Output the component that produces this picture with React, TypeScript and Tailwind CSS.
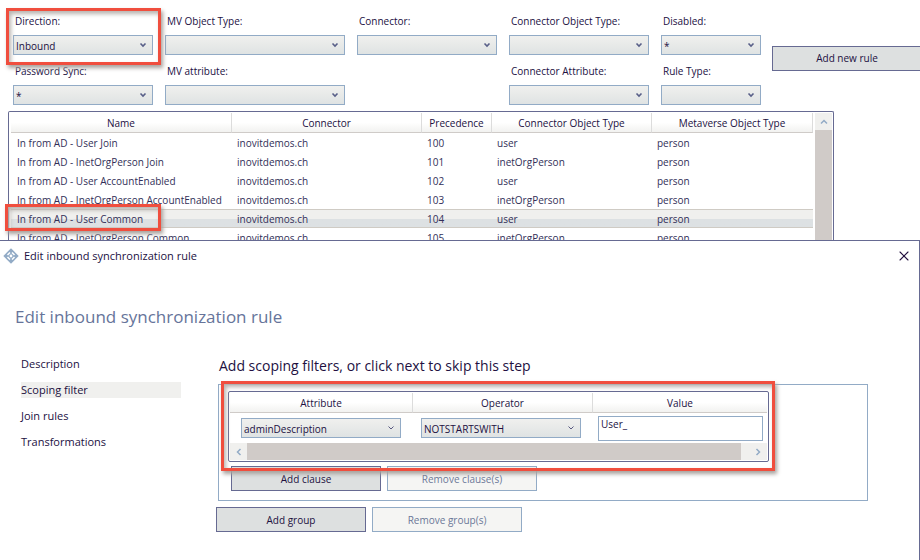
import type { ReactNode } from 'react';
import { X } from 'lucide-react';

type FieldProps = {
  id: string;
  label: string;
  value?: string;
  width: string;
  children?: ReactNode;
};

const rules = [
  ['In from AD - User Join', 'inovitdemos.ch', '100', 'user', 'person'],
  ['In from AD - InetOrgPerson Join', 'inovitdemos.ch', '101', 'inetOrgPerson', 'person'],
  ['In from AD - User AccountEnabled', 'inovitdemos.ch', '102', 'user', 'person'],
  ['In from AD - InetOrgPerson AccountEnabled', 'inovitdemos.ch', '103', 'inetOrgPerson', 'person'],
  ['In from AD - User Common', 'inovitdemos.ch', '104', 'user', 'person'],
  ['In from AD - InetOrgPerson Common', 'inovitdemos.ch', '105', 'inetOrgPerson', 'person'],
];

const headings = ['Name', 'Connector', 'Precedence', 'Connector Object Type', 'Metaverse Object Type'];

const steps = ['Description', 'Scoping filter', 'Join rules', 'Transformations'];

function Highlight({ place }: { place: string }) {
  return (
    <span
      aria-hidden="true"
      className={`pointer-events-none absolute z-10 border-3 border-[#f04e3e] shadow-[2px_3px_4px_#a8a29e,inset_2px_3px_4px_#b8b3af] ${place}`}
    />
  );
}

function Chevron({ className, d }: { className: string; d: string }) {
  return (
    <svg viewBox="0 0 8 8" className={className} fill="none" stroke="currentColor" aria-hidden="true">
      <path d={d} />
    </svg>
  );
}

function Dropdown({ id, value = '', label, thin }: { id: string; value?: string; label?: string; thin?: boolean }) {
  return (
    <div className="relative">
      <select
        id={id}
        aria-label={label}
        defaultValue={value}
        className="block h-5 w-full appearance-none border border-[#92abc6] bg-linear-to-b from-[#f0f0ee] to-[#dfe3e3] pt-px pr-4 pl-0.5 leading-4"
      >
        <option value={value}>{value}</option>
      </select>
      <Chevron
        d="M1.5 2.5 4 5 6.500 2.500"
        className={
          thin
            ? 'pointer-events-none absolute top-1.5 right-1.5 size-2 stroke-1 text-[#585880]'
            : 'pointer-events-none absolute top-1.5 right-1.5 size-2 stroke-[1.6] text-[#585f88]'
        }
      />
    </div>
  );
}

function Field({ id, label, value, width, children }: FieldProps) {
  return (
    <div className={`relative flex shrink-0 flex-col gap-1 ${width}`}>
      <label htmlFor={id} className="pl-0.5 leading-5 whitespace-nowrap">
        {label}
      </label>
      <Dropdown id={id} value={value} />
      {children}
    </div>
  );
}

function Button({ children, disabled }: { children: ReactNode; disabled?: boolean }) {
  return (
    <button
      type="button"
      disabled={disabled}
      className={
        disabled
          ? 'h-[25px] w-[150px] shrink-0 border border-[#92abc6] bg-[#f5f5f3] pt-px text-[#6b7898]'
          : 'h-[25px] w-[150px] shrink-0 border border-[#666a92] bg-[#dde0e0] pt-px'
      }
    >
      {children}
    </button>
  );
}

function RuleList() {
  return (
    <div className="mr-[86px] ml-2 flex h-[129px] overflow-hidden rounded-t-xs border border-b-0 border-[#666a92] pt-px pl-[2px]">
      <div className="min-w-0 flex-1">
        <table className="w-full table-fixed border-separate border-spacing-0 text-left">
          <colgroup>
            <col className="w-[221px]" />
            <col className="w-[190px]" />
            <col className="w-[70px]" />
            <col className="w-[160px]" />
            <col />
          </colgroup>
          <thead>
            <tr>
              {headings.map((heading) => (
                <th
                  key={heading}
                  className="h-5 border-r border-b border-r-[#dcdcdc] border-b-[#cfcbc8] bg-linear-to-b from-white from-50% to-[#f2f2f0] p-0 text-center leading-4 font-normal"
                >
                  {heading}
                </th>
              ))}
            </tr>
          </thead>
          <tbody className="text-[#322f58]">
            {rules.map((rule) => (
              <tr key={rule[2]}>
                {rule.map((cell, i) => (
                  <td
                    key={i}
                    className={
                      rule[2] === '104'
                        ? 'h-[19px] border-y border-[#cfcbc4] bg-linear-to-b from-[#f0f0ee] from-50% to-[#dde1e3] to-50% p-0 pl-[5px] leading-4 whitespace-nowrap first:pl-1.5'
                        : 'h-[19px] p-0 pl-[5px] leading-4 whitespace-nowrap first:pl-1.5'
                    }
                  >
                    {cell}
                  </td>
                ))}
              </tr>
            ))}
          </tbody>
        </table>
      </div>
      <div className="mr-px ml-[2px] flex w-[17px] flex-col bg-[#d0cbc8]">
        <button type="button" aria-label="Scroll up" className="flex h-[17px] items-center justify-center bg-[#f0f0ee] text-[#92abc6]">
          <Chevron d="M1 5.500 4 2.500 7 5.500" className="size-2 stroke-[1.5]" />
        </button>
      </div>
    </div>
  );
}

function ScopeGrid() {
  return (
    <div className="relative ml-[9px] w-[541px] rounded-xs border border-[#666a92] bg-white p-px">
      <table className="w-full table-fixed border-separate border-spacing-0">
        <colgroup>
          <col className="w-[183px]" />
          <col className="w-[180px]" />
          <col />
        </colgroup>
        <thead>
          <tr>
            {['Attribute', 'Operator', 'Value'].map((heading) => (
              <th
                key={heading}
                className="h-5 border-r border-b border-r-[#dcdcdc] border-b-[#cfcbc8] bg-linear-to-b from-white from-50% to-[#f2f2f0] p-0 leading-4 font-normal last:border-r-0"
              >
                {heading}
              </th>
            ))}
          </tr>
        </thead>
        <tbody>
          <tr>
            <td className="h-[30px] p-0 pr-3 pl-[11px]">
              <Dropdown id="attribute" label="Attribute" value="adminDescription" thin />
            </td>
            <td className="p-0 pr-3 pl-2">
              <Dropdown id="operator" label="Operator" value="NOTSTARTSWITH" thin />
            </td>
            <td className="p-0 pr-1 pl-[5px]">
              <input
                aria-label="Value"
                defaultValue="User_"
                className="block h-[25px] w-full border border-[#92abc6] bg-white pb-2 pl-0.5"
              />
            </td>
          </tr>
        </tbody>
      </table>
      <div className="flex h-[17px] justify-between bg-[#d0cbc8] text-[#92abc6]">
        <button type="button" aria-label="Scroll left" className="flex w-[17px] items-center justify-center bg-[#f0f0ee]">
          <Chevron d="M5.500 1 2.500 4 5.500 7" className="size-2 stroke-[1.5]" />
        </button>
        <button type="button" aria-label="Scroll right" className="flex w-[26px] items-center justify-center bg-[#f0f0ee] pl-2">
          <Chevron d="M2.500 1 5.500 4 2.500 7" className="size-2 stroke-[1.5]" />
        </button>
      </div>
      <Highlight place="-top-[11px] -right-[7px] -bottom-[10px] -left-2" />
    </div>
  );
}

export default function App() {
  return (
    <div className="min-h-screen overflow-hidden bg-white font-['Open_Sans','Noto_Sans',sans-serif] text-[10px] text-[#22103f]">
      <section aria-label="Synchronization rules">
        <div className="flex gap-[11px] pt-[11px] pl-[13px]">
          <div className="flex shrink-0 flex-col gap-1.5">
            <div className="flex gap-3">
              <Field id="direction" label="Direction:" value="Inbound" width="w-[140px]">
                <Highlight place="-top-[3px] -left-[7px] h-[57px] w-[155px]" />
              </Field>
              <Field id="mv-type" label="MV Object Type:" width="w-[180px]" />
              <Field id="connector" label="Connector:" width="w-[140px]" />
              <Field id="connector-type" label="Connector Object Type:" width="w-[140px]" />
              <Field id="disabled" label="Disabled:" value="*" width="w-[100px]" />
            </div>
            <div className="flex gap-3">
              <Field id="password-sync" label="Password Sync:" value="*" width="w-[140px]" />
              <Field id="mv-attribute" label="MV attribute:" width="w-[180px]" />
              <div className="w-[140px]" />
              <Field id="connector-attribute" label="Connector Attribute:" width="w-[140px]" />
              <Field id="rule-type" label="Rule Type:" width="w-[100px]" />
            </div>
          </div>
          <div className="flex items-center">
            <Button>Add new rule</Button>
          </div>
        </div>
        <div className="relative pt-1.5">
          <RuleList />
          <Highlight place="bottom-[9px] left-[5px] h-[27px] w-[156px]" />
        </div>
      </section>

      <section aria-label="Edit inbound synchronization rule" className="relative min-h-80 border-t border-r border-[#666a92] bg-white">
        <header className="flex h-[30px] items-center gap-[5px] pr-[7px] pl-[3px]">
          <svg viewBox="0 0 16 16" className="size-4 text-[#92abc6]" fill="none" stroke="currentColor" aria-hidden="true">
            <path d="M8 .3 15.700 8 8 15.700 .3 8Z" fill="currentColor" stroke="none" />
            <path d="M7 4.500 4.500 7M9 4.500 11.500 7M4.500 9 7 11.500M11.500 9 9 11.500" stroke="white" strokeWidth="1.500" />
            <circle cx="8" cy="8" r="1.400" fill="white" stroke="none" />
          </svg>
          <h1 className="flex-1 text-[11px] leading-4">Edit inbound synchronization rule</h1>
          <button type="button" aria-label="Close">
            <X className="size-4" strokeWidth={1.6} />
          </button>
        </header>
        <h2 className="pt-[34px] pl-[15px] text-[17px] leading-6 text-[#66749a]">Edit inbound synchronization rule</h2>
        <div className="flex gap-[35px] pt-[26px] pl-[21px]">
          <nav className="flex w-[160px] shrink-0 flex-col gap-2.5 pt-[1px] text-[11px]">
            {steps.map((step) => (
              <a
                key={step}
                href="#"
                aria-current={step === 'Scoping filter' ? 'step' : undefined}
                className={step === 'Scoping filter' ? 'bg-[#f0f0ee] leading-4' : 'leading-4'}
              >
                {step}
              </a>
            ))}
          </nav>
          <div className="mr-[51px] min-w-0 flex-1">
            <h3 className="pt-px pl-[3px] text-[14px] leading-5">Add scoping filters, or click next to skip this step</h3>
            <div className="mt-2 ml-[2px] border border-[#92abc6] pt-1.5 pb-[9px]">
              <ScopeGrid />
              <div className="flex gap-1.5 pt-1 pl-3">
                <Button>Add clause</Button>
                <Button disabled>Remove clause(s)</Button>
              </div>
            </div>
            <div className="flex gap-1.5 pt-1.5">
              <Button>Add group</Button>
              <Button disabled>Remove group(s)</Button>
            </div>
          </div>
        </div>
      </section>
    </div>
  );
}
